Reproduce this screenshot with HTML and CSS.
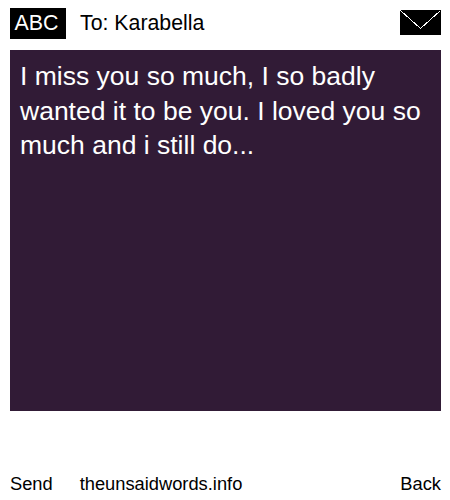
FILE: index.html
```html
<!DOCTYPE html>
<html lang="en">
<head>
    <meta charset="UTF-8">
    <meta name="viewport" content="width=device-width, initial-scale=1.0">
    <title>The Unsaid Words</title>
    <link rel="stylesheet" href="styles.css">
</head>
<body>
    <!-- Header -->
    <header class="header">
        <div class="abc">ABC</div>
        <div class="to">To: Karabella</div>
        <svg class="envelope" width="41" height="25" viewBox="0 0 41 25">
            <rect width="41" height="25" fill="#000"/>
            <path d="M0.5 0.5 L20.5 18.5 L40.5 0.5" fill="none" stroke="#fff" stroke-width="1" shape-rendering="crispEdges"/>
        </svg>
    </header>

    <!-- Message -->
    <main class="message">I miss you so much, I so badly wanted it to be you. I loved you so much and i still do...</main>

    <!-- Footer -->
    <footer class="footer">
        <a class="send" href="#send">Send</a>
        <a class="site" href="#site">theunsaidwords.info</a>
        <a class="back" href="#back">Back</a>
    </footer>
</body>
</html>
```

FILE: styles.css
```css
* {
    margin: 0;
    padding: 0;
    box-sizing: border-box;
    font-family: 'Liberation Sans', Arial, sans-serif;
}

body {
    width: 450px;
    height: 500px;
    padding: 8px 9px 0 10px;
    background: white;
    color: black;
    overflow: hidden;
}

/* Header */
.header {
    display: flex;
    align-items: flex-start;
    height: 31px;
}

.abc {
    width: 56px;
    height: 31px;
    padding-right: 3px;
    background: black;
    color: white;
    font-size: 21.4px;
    line-height: 30px;
    text-align: center;
}

.to {
    margin-left: 14px;
    font-size: 21.3px;
    line-height: 31px;
}

.envelope {
    display: block;
    margin-top: 2px;
    margin-left: auto;
}

/* Message */
.message {
    height: 361px;
    margin-top: 11px;
    padding: 9px 10px;
    background: #311b36;
    color: white;
    font-size: 26.5px;
    line-height: 34.5px;
}

/* Footer */
.footer {
    display: flex;
    margin-top: 62px;
    font-size: 18.3px;
    line-height: 21px;
}

.footer a {
    color: black;
    text-decoration: none;
}

.site {
    margin-left: 27px;
}

.back {
    margin-left: auto;
}
```
